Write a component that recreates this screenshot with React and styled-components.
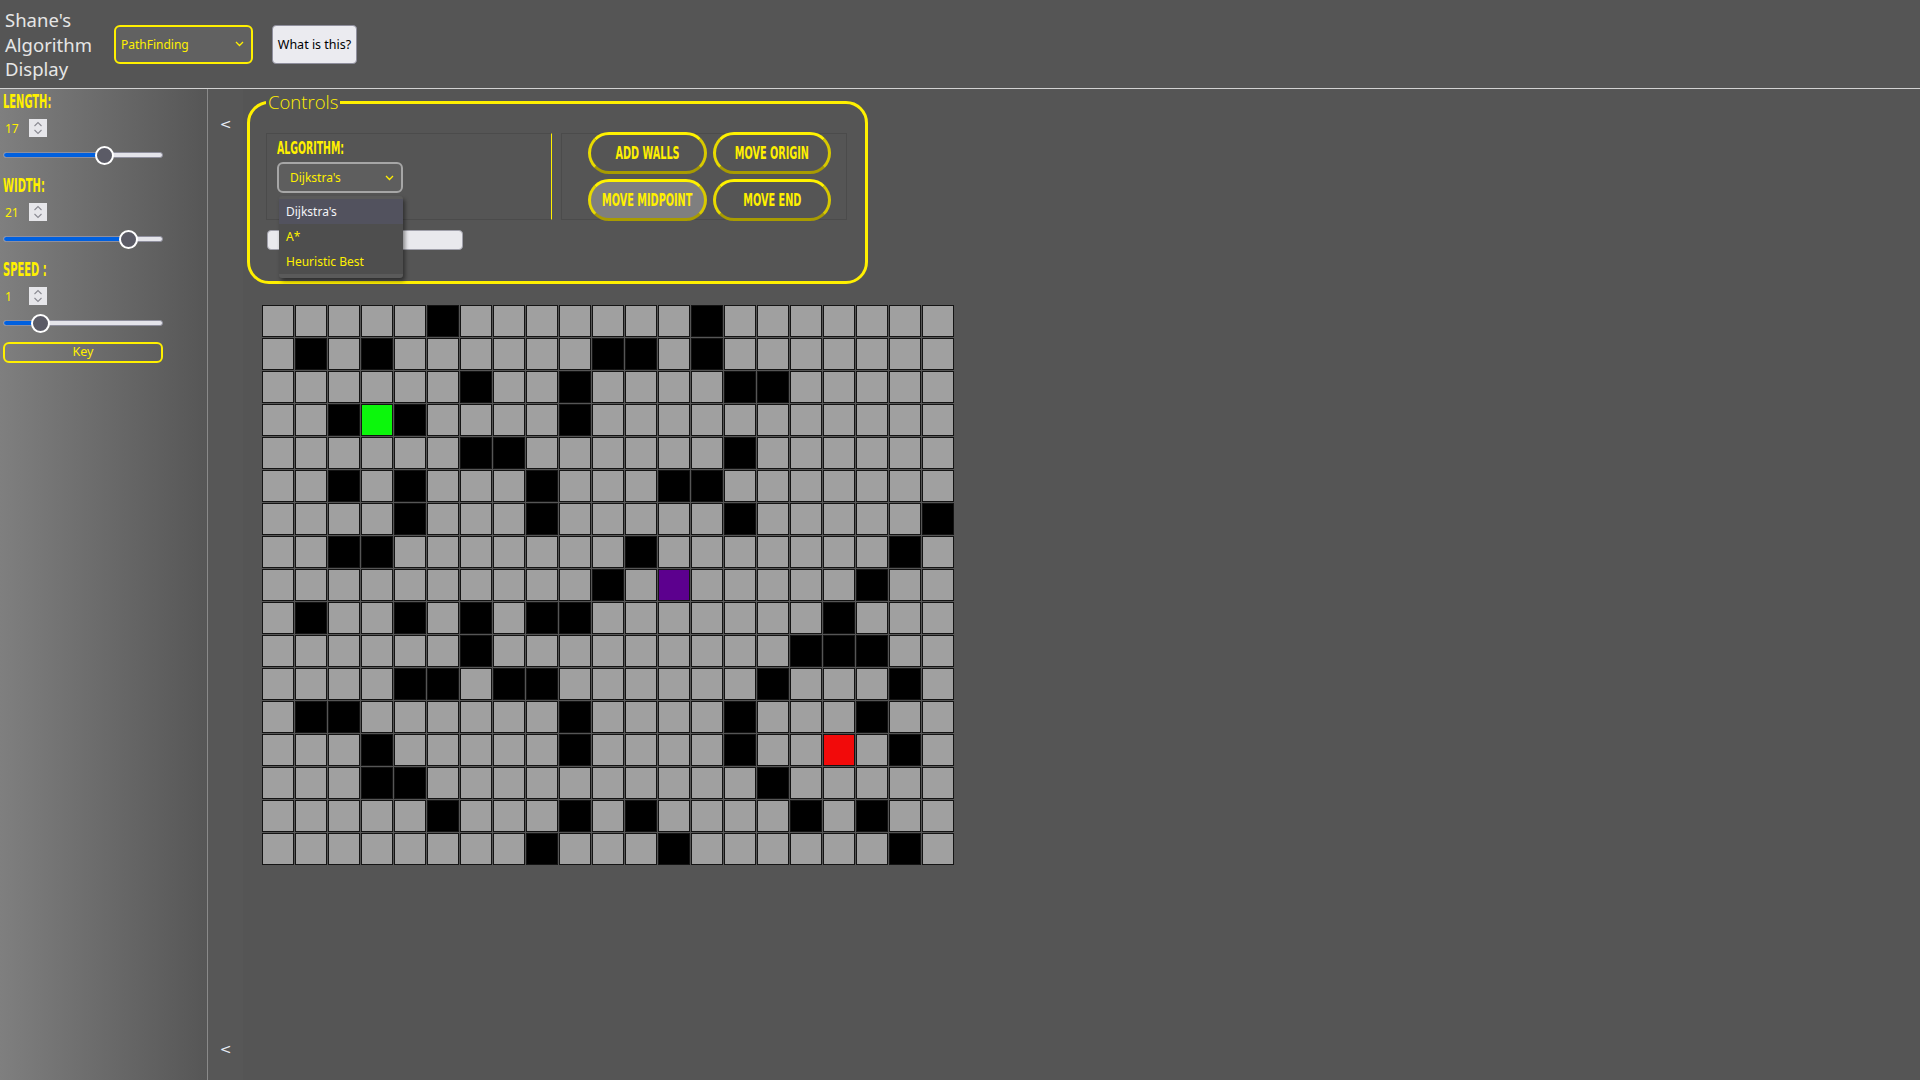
import React from 'react';
import styled, { createGlobalStyle } from 'styled-components';

const YELLOW = '#fff000';

const GlobalStyle = createGlobalStyle`
  html, body { margin: 0; padding: 0; background: #555555; }
  body { font-family: "Noto Sans", "Open Sans", sans-serif; overflow: hidden; }
  * { box-sizing: border-box; }
`;

const Page = styled.div`
  width: 1920px;
  height: 1080px;
  display: flex;
  flex-direction: column;
  background: #555555;
`;

const Header = styled.header`
  height: 89px;
  flex: none;
  display: flex;
  align-items: center;
  padding-left: 5px;
  border-bottom: 1px solid #d2d2d2;
`;

const Title = styled.div`
  width: 95px;
  font-size: 18.5px;
  line-height: 24.5px;
  color: #e6e6e6;
  padding-top: 2px;
`;

const TopSelect = styled.div`
  margin-left: 14px;
  width: 139px;
  height: 39px;
  border: 2px solid ${YELLOW};
  border-radius: 6px;
  background: #616161;
  color: ${YELLOW};
  font-size: 12px;
  display: flex;
  align-items: center;
  justify-content: space-between;
  padding: 0 7px 0 5px;
`;

const InfoButton = styled.button`
  margin-left: 19px;
  width: 85px;
  height: 39px;
  background: #ebebf0;
  border: 1px solid #8f8f9d;
  border-radius: 4px;
  font-family: "Noto Sans", sans-serif;
  font-size: 12.5px;
  color: #000;
  padding: 0;
`;

const Body = styled.div`
  flex: 1;
  display: flex;
  min-height: 0;
`;

const Sidebar = styled.aside`
  width: 208px;
  flex: none;
  border-right: 1px solid #8a8a8a;
  background: linear-gradient(to right, #7f7f7f, #565656);
  padding: 2px 0 0 3px;
  display: flex;
  flex-direction: column;
`;

const Condensed = styled.span`
  display: inline-block;
  font-family: "DejaVu Sans Condensed", "DejaVu Sans", sans-serif;
  font-weight: 700;
  font-size: ${(p) => p.$size || 19}px;
  line-height: 1;
  color: ${YELLOW};
  white-space: nowrap;
  transform: scaleX(${(p) => p.$sx || 0.58});
  transform-origin: ${(p) => p.$origin || 'left'} center;
`;

const SideLabel = styled.div`
  height: 19px;
  margin-top: ${(p) => (p.$first ? 0 : 10)}px;
`;

const NumberRow = styled.div`
  margin-top: 9px;
  height: 18px;
  display: flex;
  align-items: center;
  padding-left: 2px;
`;

const NumberInput = styled.input`
  width: 24px;
  padding: 0;
  border: none;
  background: transparent;
  color: ${YELLOW};
  font-family: "Noto Sans", sans-serif;
  font-size: 12px;
  outline: none;
`;

const Spinner = styled.div`
  width: 18px;
  height: 18px;
  background: #e6e6ea;
  display: flex;
  align-items: center;
  justify-content: center;
`;

const SliderBox = styled.div`
  position: relative;
  margin-top: 8px;
  width: 160px;
  height: 20px;
  display: flex;
  align-items: center;
`;

const Rail = styled.div`
  flex: 1;
  height: 6px;
  border-radius: 3px;
  background: #e4e4ea;
  border: 1px solid #8f8f9d;
  overflow: hidden;
`;

const RailFill = styled.div`
  height: 100%;
  background: #0060df;
`;

const Thumb = styled.div`
  position: absolute;
  top: 50%;
  width: 19px;
  height: 19px;
  margin: -9.5px 0 0 -9.5px;
  border-radius: 50%;
  background: #5b5b66;
  border: 2px solid #ffffff;
`;

const KeyButton = styled.button`
  margin-top: 9px;
  width: 160px;
  height: 21px;
  border: 2px solid ${YELLOW};
  border-radius: 6px;
  background: transparent;
  color: ${YELLOW};
  font-family: "Noto Sans", sans-serif;
  font-size: 12.5px;
  line-height: 1;
  padding: 0;
`;

const ToggleColumn = styled.div`
  width: 35px;
  flex: none;
  display: flex;
  flex-direction: column;
  justify-content: space-between;
  align-items: center;
  padding: 25px 0 21px;
  background: #575757;
`;

const Chevron = styled.span`
  font-family: "DejaVu Sans", sans-serif;
  font-size: 14px;
  line-height: 20px;
  color: #e8eef6;
`;

const Main = styled.main`
  flex: 1;
  padding: 2px 0 0 4px;
  display: flex;
  flex-direction: column;
  align-items: flex-start;
`;

const Controls = styled.fieldset`
  margin: 0;
  width: 621px;
  border: 3px solid ${YELLOW};
  border-radius: 22px;
  padding: 20px 18px 31px 16px;
  min-inline-size: 0;
`;

const Legend = styled.legend`
  padding: 0 2px;
  font-family: "Open Sans", "Noto Sans", sans-serif;
  font-weight: 300;
  font-size: 18.5px;
  line-height: 22px;
  color: ${YELLOW};
`;

const PanelRow = styled.div`
  display: flex;
  gap: 9px;
  height: 87px;
`;

const AlgoPanel = styled.div`
  position: relative;
  width: 286px;
  border: 1px solid #4b4b4b;
  border-right: 1px solid ${YELLOW};
  padding: 3px 0 0 10px;
`;

const SelectWrap = styled.div`
  position: relative;
  margin-top: 3px;
  width: 126px;
`;

const AlgoSelect = styled.div`
  height: 31px;
  border: 2px solid #a6a6a6;
  border-radius: 6px;
  background: #5e5e5e;
  color: ${YELLOW};
  font-size: 12px;
  display: flex;
  align-items: center;
  justify-content: space-between;
  padding: 0 7px 0 11px;
`;

const OptionList = styled.ul`
  position: absolute;
  z-index: 10;
  top: calc(100% + 3px);
  left: 2px;
  width: 124px;
  margin: 0;
  padding: 0;
  list-style: none;
  background: #4e4e4e;
  border-top: 3px solid #5a5a5a;
  border-bottom: 4px solid #5a5a5a;
  border-radius: 3px;
  box-shadow: 2px 3px 4px rgba(0, 0, 0, 0.45);
`;

const OptionItem = styled.li`
  height: 25px;
  display: flex;
  align-items: center;
  padding-left: 7px;
  font-size: 12px;
  color: ${(p) => (p.$active ? '#f4f4f8' : YELLOW)};
  background: ${(p) => (p.$active ? '#52525e' : 'transparent')};
`;

const ButtonPanel = styled.div`
  width: 286px;
  border: 1px solid #4b4b4b;
  padding-left: 26px;
  display: grid;
  grid-template-columns: 119px 118px;
  grid-auto-rows: 42px;
  column-gap: 6px;
  row-gap: 5px;
  align-content: center;
`;

const PillButton = styled.button`
  border: 3px solid;
  border-color: #fff200 #d8c900 #a99c00 #e8da00;
  border-radius: 22px;
  background: ${(p) => (p.$active ? '#7f7f7f' : 'transparent')};
  padding: 0;
  display: flex;
  align-items: center;
  justify-content: center;
  overflow: hidden;
`;

const RunBar = styled.button`
  display: block;
  margin: 10px 0 0 1px;
  width: 196px;
  height: 20px;
  background: #e9e9ed;
  border: 1px solid #a0a0aa;
  border-radius: 4px;
  padding: 0;
`;

const Board = styled.div`
  margin: 21px 0 0 15px;
  display: grid;
  grid-template-columns: repeat(21, 32px);
  grid-auto-rows: 32px;
  gap: 1px;
`;

const CELL_COLORS = {
  empty: '#a0a0a0',
  wall: '#000000',
  origin: '#0cf70c',
  mid: '#5c008e',
  end: '#f20a0a',
};

const Cell = styled.div`
  border: 1px solid #141414;
  background: ${(p) => CELL_COLORS[p.$kind]};
`;

const WALLS = [
  [5, 13],
  [1, 3, 10, 11, 13],
  [6, 9, 14, 15],
  [2, 4, 9],
  [6, 7, 14],
  [2, 4, 8, 12, 13],
  [4, 8, 14, 20],
  [2, 3, 11, 19],
  [10, 18],
  [1, 4, 6, 8, 9, 17],
  [6, 16, 17, 18],
  [4, 5, 7, 8, 15, 19],
  [1, 2, 9, 14, 18],
  [3, 9, 14, 19],
  [3, 4, 15],
  [5, 9, 11, 16, 18],
  [8, 12, 19],
];
const SPECIAL = { '3-3': 'origin', '8-12': 'mid', '13-17': 'end' };

const SLIDERS = [
  { label: 'LENGTH:', value: 17, min: 2, max: 25 },
  { label: 'WIDTH:', value: 21, min: 2, max: 25 },
  { label: 'SPEED :', value: 1, min: 0, max: 5 },
];

const DownChevron = ({ color = YELLOW }) => (
  <svg width="9" height="6" viewBox="0 0 9 6">
    <polyline points="1,1 4.5,4.5 8,1" fill="none" stroke={color} strokeWidth="1.3" />
  </svg>
);

const SpinIcon = () => (
  <svg width="10" height="14" viewBox="0 0 10 14">
    <polyline points="1.5,5 5,1.5 8.5,5" fill="none" stroke="#8a8a92" strokeWidth="1.1" />
    <polyline points="1.5,9 5,12.5 8.5,9" fill="none" stroke="#8a8a92" strokeWidth="1.1" />
  </svg>
);

function Slider({ value, min, max }) {
  const frac = (value - min) / (max - min);
  const center = 9.5 + frac * (160 - 19);
  return (
    <SliderBox>
      <Rail>
        <RailFill style={{ width: `${center}px` }} />
      </Rail>
      <Thumb style={{ left: `${center}px` }} />
    </SliderBox>
  );
}

export default function App() {
  const cells = [];
  for (let r = 0; r < 17; r++) {
    for (let c = 0; c < 21; c++) {
      const kind = SPECIAL[`${r}-${c}`] || (WALLS[r].includes(c) ? 'wall' : 'empty');
      cells.push(<Cell key={`${r}-${c}`} $kind={kind} />);
    }
  }

  return (
    <Page>
      <GlobalStyle />
      <Header>
        <Title>Shane's Algorithm Display</Title>
        <TopSelect>
          <span>PathFinding</span>
          <DownChevron />
        </TopSelect>
        <InfoButton>What is this?</InfoButton>
      </Header>
      <Body>
        <Sidebar>
          {SLIDERS.map((s, i) => (
            <React.Fragment key={s.label}>
              <SideLabel $first={i === 0}>
                <Condensed>{s.label}</Condensed>
              </SideLabel>
              <NumberRow>
                <NumberInput readOnly value={s.value} />
                <Spinner>
                  <SpinIcon />
                </Spinner>
              </NumberRow>
              <Slider value={s.value} min={s.min} max={s.max} />
            </React.Fragment>
          ))}
          <KeyButton>Key</KeyButton>
        </Sidebar>
        <ToggleColumn>
          <Chevron>&lt;</Chevron>
          <Chevron>&lt;</Chevron>
        </ToggleColumn>
        <Main>
          <Controls>
            <Legend>Controls</Legend>
            <PanelRow>
              <AlgoPanel>
                <Condensed $size={18}>ALGORITHM:</Condensed>
                <SelectWrap>
                  <AlgoSelect>
                    <span>Dijkstra's</span>
                    <DownChevron />
                  </AlgoSelect>
                  <OptionList>
                    <OptionItem $active>Dijkstra's</OptionItem>
                    <OptionItem>A*</OptionItem>
                    <OptionItem>Heuristic Best</OptionItem>
                  </OptionList>
                </SelectWrap>
              </AlgoPanel>
              <ButtonPanel>
                <PillButton><Condensed $size={18} $sx={0.6} $origin="center">ADD WALLS</Condensed></PillButton>
                <PillButton><Condensed $size={18} $sx={0.6} $origin="center">MOVE ORIGIN</Condensed></PillButton>
                <PillButton $active><Condensed $size={18} $sx={0.6} $origin="center">MOVE MIDPOINT</Condensed></PillButton>
                <PillButton><Condensed $size={18} $sx={0.6} $origin="center">MOVE END</Condensed></PillButton>
              </ButtonPanel>
            </PanelRow>
            <RunBar aria-label="Run" />
          </Controls>
          <Board>{cells}</Board>
        </Main>
      </Body>
    </Page>
  );
}
